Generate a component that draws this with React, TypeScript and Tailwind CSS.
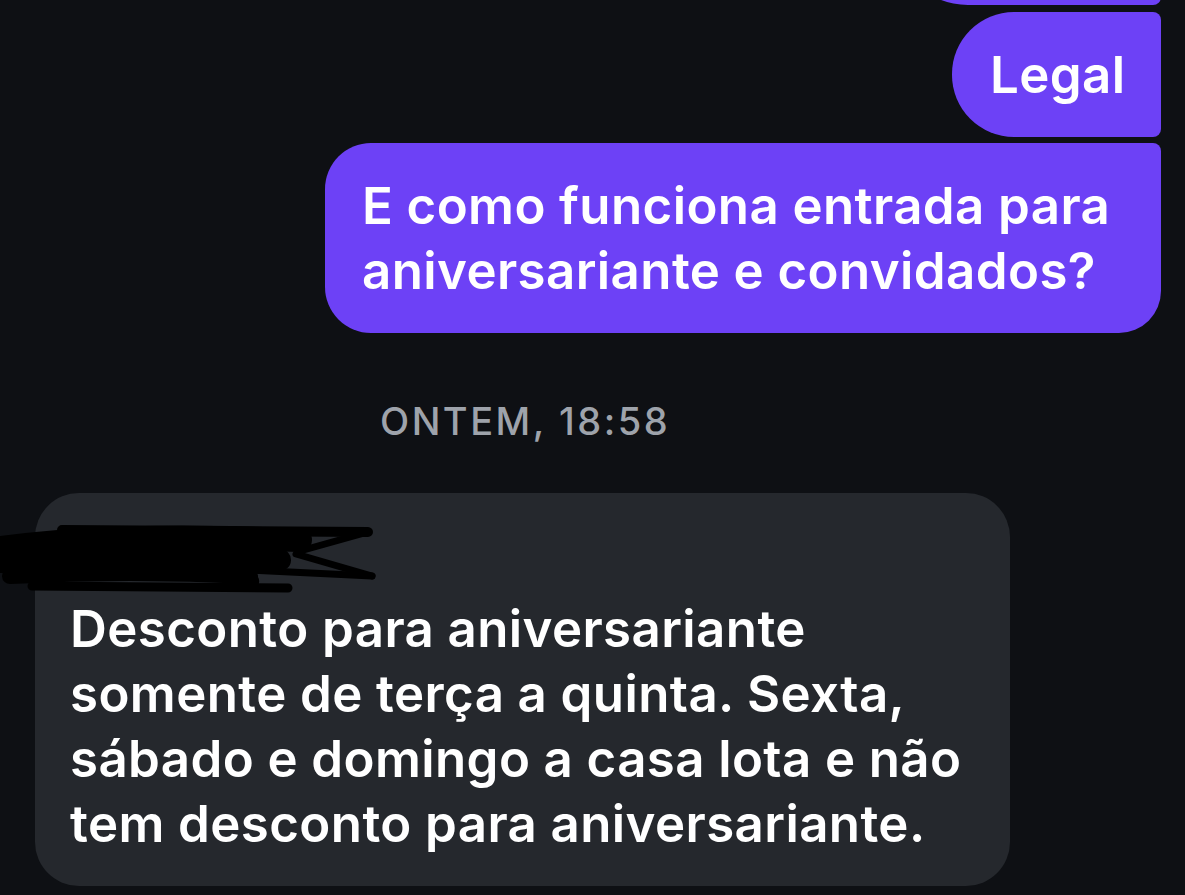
const font = { fontFamily: '"Inter", "Noto Sans", "Liberation Sans", sans-serif' }

const Scribble = () => (
    <svg
        className="absolute left-0 top-[518px]"
        width="390"
        height="80"
        viewBox="0 0 390 80"
        fill="none"
    >
        <g stroke="#000" strokeLinecap="round" strokeLinejoin="round">
            <path d="M0 30 C60 22 140 18 230 20 L300 22" strokeWidth="24" />
            <path d="M0 44 C80 40 180 38 280 42" strokeWidth="22" />
            <path d="M10 58 C90 54 170 54 250 58" strokeWidth="16" />
            <path d="M62 12 L368 14" strokeWidth="10" />
            <path d="M368 14 L300 33" strokeWidth="7" />
            <path d="M296 36 L372 58" strokeWidth="7" />
            <path d="M372 58 L250 52" strokeWidth="7" />
            <path d="M250 54 C262 66 255 72 228 66" strokeWidth="7" />
            <path d="M32 68 L288 70" strokeWidth="9" />
            <path d="M0 24 L40 26" strokeWidth="10" />
        </g>
    </svg>
)

const App = () => {
    return (
        <div className="relative w-[1185px] h-[895px] overflow-hidden bg-[#0e1014] text-white" style={font}>
            <div className="flex flex-col items-end pr-[24px]">
                <div className="w-[268px] h-[150px] -mt-[145px] bg-[#6d41f6] rounded-l-[75px] rounded-tr-[8px] rounded-br-[8px]" />

                <div className="mt-[7px] w-[209px] pl-[38px] py-[30px] bg-[#6d41f6] rounded-l-[62px] rounded-r-[8px] text-[51px] leading-[65px] font-semibold tracking-[0.4px]">
                    Legal
                </div>

                <div className="mt-[6px] w-[836px] pl-[37px] py-[30px] bg-[#6d41f6] rounded-tl-[46px] rounded-bl-[46px] rounded-br-[42px] rounded-tr-[8px] text-[51px] leading-[65px] font-semibold tracking-[0.4px] whitespace-nowrap">
                    E como funciona entrada para
                    <br />
                    aniversariante e convidados?
                </div>
            </div>

            <div className="pl-[380px] mt-[66px] text-[38px] leading-[44px] font-medium tracking-[2.5px] text-[#9ea3ab]">
                ONTEM, 18:58
            </div>

            <div className="ml-[35px] mt-[50px] w-[975px] pl-[35px] pt-[30px] pb-[30px] bg-[#25282d] rounded-[44px] text-[51px] leading-[65px] font-semibold tracking-[0.4px] whitespace-nowrap">
                <div className="h-[73px]" />
                <p>
                    Desconto para aniversariante
                    <br />
                    somente de terça a quinta. Sexta,
                    <br />
                    sábado e domingo a casa lota e não
                    <br />
                    tem desconto para aniversariante.
                </p>
            </div>

            <Scribble />
        </div>
    )
}

export default App
